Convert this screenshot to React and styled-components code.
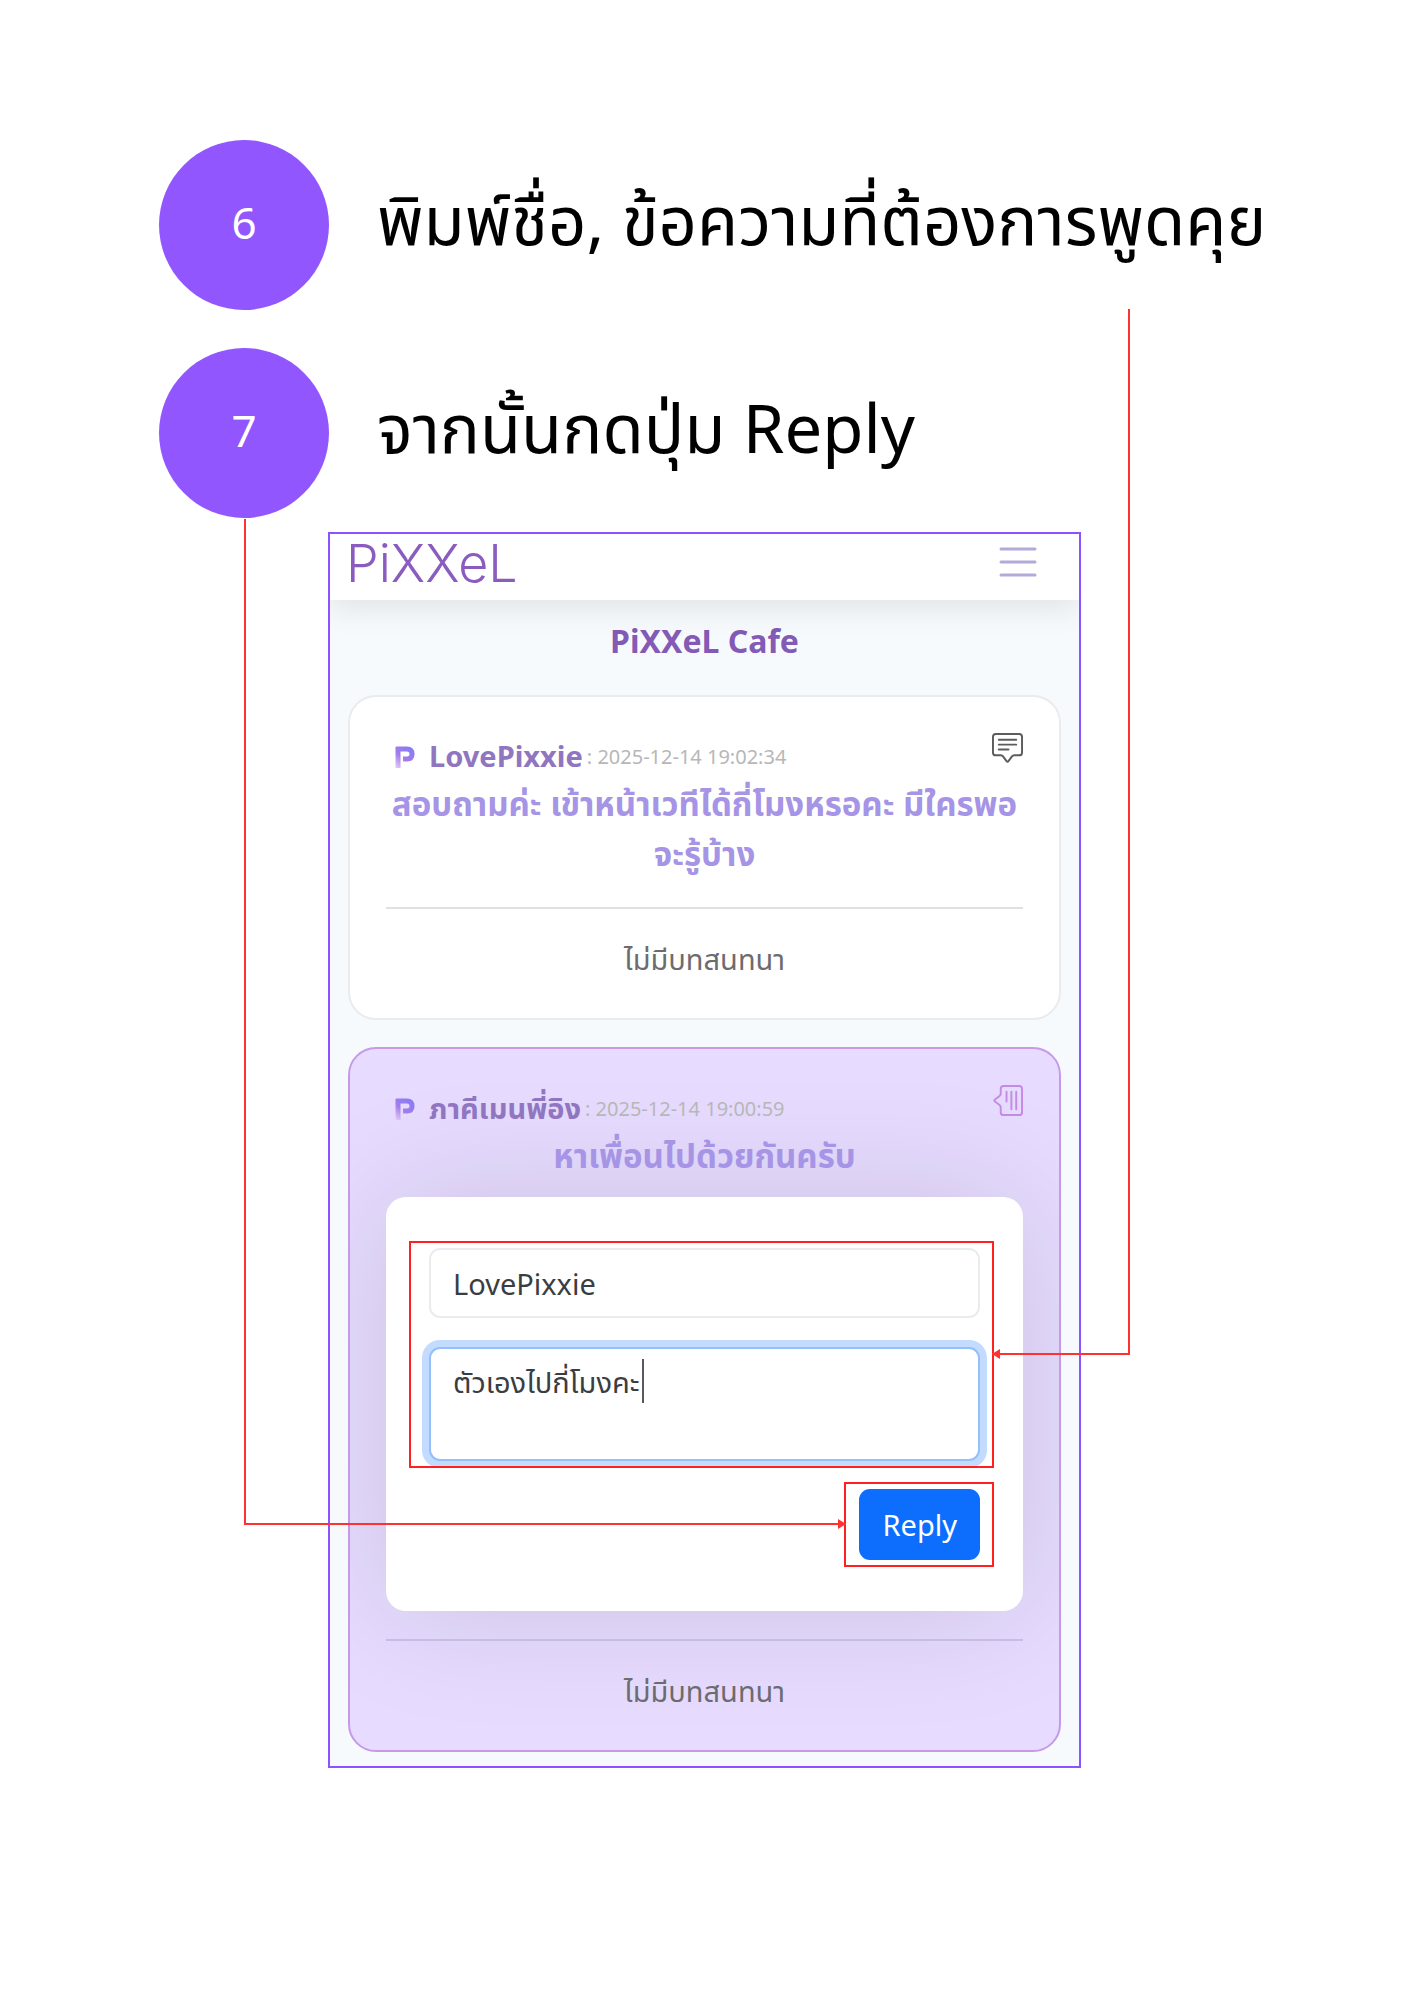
import styled, { createGlobalStyle, css } from "styled-components";
import { BsChatSquareText } from "react-icons/bs";

const steps = [
  { id: 6, text: "พิมพ์ชื่อ, ข้อความที่ต้องการพูดคุย" },
  { id: 7, text: "จากนั้นกดปุ่ม Reply" },
];

const posts = [
  {
    id: 1,
    author: "LovePixxie",
    date: "2025-12-14 19:02:34",
    message: "สอบถามค่ะ เข้าหน้าเวทีได้กี่โมงหรอคะ มีใครพอจะรู้บ้าง",
    open: false,
  },
  {
    id: 2,
    author: "ภาคีเมนพี่อิง",
    date: "2025-12-14 19:00:59",
    message: "หาเพื่อนไปด้วยกันครับ",
    open: true,
  },
];

const PixxelMark = () => {
  return (
    <svg width="20" height="24" viewBox="0 0 20 24" aria-hidden="true">
      <defs>
        <linearGradient
          id="mark"
          gradientUnits="userSpaceOnUse"
          x1="2"
          y1="24"
          x2="16"
          y2="6"
        >
          <stop offset="0" stopColor="#e0c8f8" />
          <stop offset="0.5" stopColor="#a57bea" />
          <stop offset="1" stopColor="#8a7cf6" />
        </linearGradient>
      </defs>
      <g fill="none" stroke="url(#mark)" strokeWidth="5">
        <path d="M3 24V3" />
        <path d="M1 5H12Q17 5 17 10Q17 15 12 15H8" />
      </g>
    </svg>
  );
};

const ReplyForm = () => {
  return (
    <FormBox onSubmit={(e) => e.preventDefault()}>
      <Fields>
        <TextInput aria-label="ชื่อ" defaultValue="LovePixxie" />
        <MessageField>
          <MessageInput aria-label="ข้อความ" defaultValue="ตัวเองไปกี่โมงคะ" />
          <Caret />
        </MessageField>
        <Highlight>
          <NameConnector />
          <ArrowHead $side="right" viewBox="0 0 8 10">
            <path d="M0 5L8 0V10Z" fill="#ff3131" />
          </ArrowHead>
        </Highlight>
      </Fields>
      <Actions>
        <ReplyButton type="submit">Reply</ReplyButton>
        <Highlight>
          <ButtonConnector />
          <ArrowHead $side="left" viewBox="0 0 8 10">
            <path d="M8 5L0 0V10Z" fill="#ff3131" />
          </ArrowHead>
        </Highlight>
      </Actions>
    </FormBox>
  );
};

const Post = ({ post }) => {
  return (
    <Card $open={post.open}>
      {post.open && <Shade />}
      <PostHead>
        <PixxelMark />
        <Author>{post.author}</Author>
        <PostDate>: {post.date}</PostDate>
        <ToggleButton type="button" aria-label="Reply" $open={post.open}>
          <BsChatSquareText size={31} />
        </ToggleButton>
      </PostHead>
      <Message>{post.message}</Message>
      {post.open && <ReplyForm />}
      <Divider $open={post.open} />
      <Empty>ไม่มีบทสนทนา</Empty>
    </Card>
  );
};

const App = () => {
  return (
    <Sheet>
      <GlobalStyle />
      <Steps>
        {steps.map((step) => (
          <Step key={step.id}>
            <StepNumber>{step.id}</StepNumber>
            <StepText>{step.text}</StepText>
          </Step>
        ))}
      </Steps>
      <Phone>
        <Header>
          <Brand href="#">PiXXeL</Brand>
          <MenuButton type="button" aria-label="Menu">
            <svg width="38" height="32" viewBox="0 0 38 32">
              <path
                d="M2 3H36M2 16H36M2 29H36"
                stroke="#b3aad9"
                strokeWidth="3"
                strokeLinecap="round"
              />
            </svg>
          </MenuButton>
        </Header>
        <Content>
          <PageTitle>PiXXeL Cafe</PageTitle>
          {posts.map((post) => (
            <Post key={post.id} post={post} />
          ))}
        </Content>
      </Phone>
    </Sheet>
  );
};

export default App;

const GlobalStyle = createGlobalStyle`
  * {
    box-sizing: border-box;
  }

  body {
    margin: 0;
    background-color: #fff;
    font-family: "Noto Sans", "Noto Sans Thai", sans-serif;
  }

  input, textarea, button {
    font-family: inherit;
  }
`;

const Sheet = styled.main`
  max-width: 1091px;
  margin: 0 auto;
  padding: 140px 0 120px;
`;

const Steps = styled.ol`
  display: grid;
  gap: 38px;
  margin: 0;
  padding: 0;
  list-style: none;
`;

const Step = styled.li`
  display: flex;
  align-items: center;
  gap: 48px;
`;

const StepNumber = styled.span`
  display: flex;
  align-items: center;
  justify-content: center;
  flex: none;
  width: 170px;
  height: 170px;
  padding-bottom: 6px;
  border-radius: 50%;
  background-color: #9256ff;
  color: #fff;
  font-size: 44px;
`;

const StepText = styled.h2`
  margin: 0;
  padding-bottom: 12px;
  color: #000;
  font-size: 67px;
  font-weight: 400;
  line-height: 100px;
  white-space: nowrap;
`;

const Phone = styled.section`
  max-width: 753px;
  margin: 14px auto 0;
  border: 2px solid #8c52ff;
  background-color: #f6fafd;
`;

const Header = styled.header`
  display: flex;
  align-items: center;
  justify-content: space-between;
  height: 66px;
  padding: 0 42px 10px 16px;
  background-color: #fff;
  box-shadow: 0 12px 28px rgba(0, 0, 0, 0.08);
  clip-path: inset(0 0 -40px 0);
`;

const Brand = styled.a`
  padding-top: 4px;
  color: #8a5cbf;
  font-family: Inter, sans-serif;
  font-size: 52px;
  font-weight: 300;
  line-height: 58px;
  text-decoration: none;
`;

const MenuButton = styled.button`
  display: flex;
  padding: 0;
  border: 0;
  background: none;
`;

const Content = styled.div`
  display: grid;
  gap: 27px;
  padding: 21px 18px 14px;
`;

const PageTitle = styled.h1`
  margin: 0;
  padding-bottom: 7px;
  color: #835ab5;
  font-size: 32px;
  font-weight: 700;
  line-height: 40px;
  text-align: center;
`;

const Card = styled.article`
  position: relative;
  isolation: isolate;
  padding: 36px 36px 37px;
  border: 2px solid #e9ebec;
  border-radius: 28px;
  background-color: #fff;

  ${({ $open }) =>
    $open &&
    css`
      border-color: #c79ae8;
      background-color: #e7dcff;
    `}
`;

/* soft shadow of the form, kept inside the rounded card */
const Shade = styled.div`
  position: absolute;
  z-index: -1;
  inset: 0;
  border-radius: 26px;
  overflow: hidden;

  &::before {
    content: "";
    position: absolute;
    inset: 148px 36px 140px;
    border-radius: 20px;
    box-shadow: 0 0 130px rgba(0, 0, 0, 0.12);
  }
`;

const PostHead = styled.div`
  display: flex;
  align-items: center;
  height: 46px;
  padding-left: 9px;
`;

const Author = styled.span`
  margin-left: 14px;
  color: #9076c0;
  font-size: 29px;
  font-weight: 700;
  line-height: 40px;
`;

const PostDate = styled.time`
  margin-left: 4px;
  color: #b7b7b7;
  font-size: 20px;
`;

const ToggleButton = styled.button`
  display: flex;
  align-self: flex-start;
  margin-left: auto;
  padding: 0;
  border: 0;
  background: none;
  color: #5c5c5c;

  ${({ $open }) =>
    $open &&
    css`
      color: #c48be4;

      svg {
        transform: rotate(90deg);
      }
    `}
`;

const Message = styled.p`
  margin: 0;
  color: #a694e6;
  font-size: 33px;
  font-weight: 700;
  line-height: 50px;
  text-align: center;
`;

const FormBox = styled.form`
  margin-top: 16px;
  padding: 51px 43px;
  border-radius: 20px;
  background-color: #fff;
`;

const Fields = styled.div`
  position: relative;
  display: grid;
  gap: 29px;
`;

const field = css`
  display: block;
  width: 100%;
  padding: 0 22px;
  border: 2px solid #e9ecef;
  border-radius: 11px;
  background-color: #fff;
  color: #3a3d42;
  font-size: 29px;
  outline: none;
`;

const TextInput = styled.input`
  ${field}
  height: 70px;
`;

const MessageField = styled.div`
  position: relative;
`;

const MessageInput = styled.textarea`
  ${field}
  height: 114px;
  padding-top: 11px;
  border-color: #93bffb;
  box-shadow: 0 0 0 7px #c2dbff;
  line-height: 44px;
  resize: none;
`;

const Caret = styled.span`
  position: absolute;
  top: 12px;
  left: 213px;
  width: 2px;
  height: 44px;
  background-color: #55585c;
`;

const Actions = styled.div`
  position: relative;
  width: fit-content;
  margin: 28px 0 0 auto;
`;

const ReplyButton = styled.button`
  display: block;
  height: 71px;
  padding: 0 23px;
  border: 0;
  border-radius: 11px;
  background-color: #0d6efd;
  color: #fff;
  font-size: 29px;
`;

const Highlight = styled.div`
  position: absolute;
  inset: -7px -14px -7px -20px;
  border: 2px solid #ff2020;
  pointer-events: none;

  ${Actions} & {
    left: -15px;
  }
`;

const NameConnector = styled.div`
  position: absolute;
  bottom: 50%;
  left: 100%;
  width: 138px;
  height: 1046px;
  border: solid #ff3131;
  border-width: 0 2px 2px 0;
`;

const ButtonConnector = styled.div`
  position: absolute;
  right: 100%;
  bottom: 50%;
  width: 602px;
  height: 1006px;
  border: solid #ff3131;
  border-width: 0 0 2px 2px;
`;

const ArrowHead = styled.svg`
  position: absolute;
  top: calc(50% - 6px);
  ${({ $side }) => ($side === "right" ? "left: 100%;" : "right: 100%;")}
  width: 8px;
  height: 10px;
`;

const Divider = styled.hr`
  margin: 28px 0;
  border: 0;
  border-top: 2px solid ${({ $open }) => ($open ? "#c9bce4" : "#e0e0e0")};
`;

const Empty = styled.p`
  margin: 0;
  color: #6c6c70;
  font-size: 29px;
  line-height: 44px;
  text-align: center;
`;
